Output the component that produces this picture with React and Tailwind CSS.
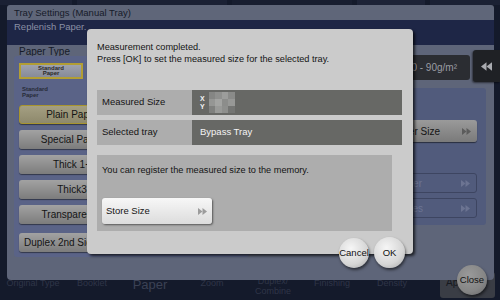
const Arrows = ({ color = "#9a9a9a", dir = "right", w = 9, h = 7 }) => (
  <svg width={w} height={h} viewBox="0 0 9 7" className="shrink-0">
    {dir === "right" ? (
      <g fill={color}>
        <polygon points="0,0 4.5,3.5 0,7" />
        <polygon points="4.5,0 9,3.5 4.5,7" />
      </g>
    ) : (
      <g fill={color}>
        <polygon points="4.5,0 0,3.5 4.5,7" />
        <polygon points="9,0 4.5,3.5 9,7" />
      </g>
    )}
  </svg>
);

const PanelButton = ({ children, selected, className = "" }) => (
  <div
    className={
      "h-[19px] w-[106px] shrink-0 rounded-[3px] flex items-center justify-center text-[10px] leading-[12px] text-[#141414] shadow-[0_1px_1px_rgba(0,0,0,0.45)] " +
      (selected
        ? "border border-[#a8952f] bg-[linear-gradient(#a49f82,#8e896c)] "
        : "bg-[linear-gradient(#a2a2a2,#7c7c7c)] ") +
      className
    }
  >
    {children}
  </div>
);

const Circle = ({ children, className = "" }) => (
  <div
    className={
      "absolute rounded-full flex items-center justify-center text-[9.5px] leading-[10px] text-[#111] shadow-[1px_2px_3px_rgba(0,0,0,0.55)] " +
      className
    }
  >
    {children}
  </div>
);

export default function App() {
  return (
    <div className="relative w-[500px] h-[300px] overflow-hidden bg-[#141a2b] font-['Liberation_Sans',Arial,sans-serif] text-[#111]">
      {/* top tabs of background screen */}
      <div className="flex h-[5px] gap-[5px]">
        <div className="w-[72px] bg-[#1b2134]" />
        <div className="w-[150px] bg-[#1b2134]" />
        <div className="w-[120px] bg-[#181e30]" />
        <div className="w-[68px] bg-[#1d2337]" />
        <div className="flex-1 bg-[#1b2134]" />
      </div>

      {/* window */}
      <div className="relative z-10 ml-[7px] w-[487px] h-[275px] flex flex-col">
        <div className="h-[15px] shrink-0 rounded-t-[3px] bg-[#5f6679] pl-[7px] text-[9.5px] leading-[15px] text-[#161b29]">
          Tray Settings (Manual Tray)
        </div>
        <div className="h-[25px] shrink-0 bg-[#1e2646] pl-[7px] pt-[2px] text-[9.5px] leading-[10px] text-[#8a90a5]">
          Replenish Paper.
        </div>
        <div className="flex-1 flex bg-[#5e6579] rounded-b-[4px]">
          {/* left column */}
          <div className="pl-[7px] w-[245px] flex flex-col">
            <div className="h-[11px] pl-[5px] text-[10px] leading-[14px] text-[#151a28]">Paper Type</div>
            <div className="h-[201px] w-[235px] rounded-[3px] bg-[#5a6387] px-[5px] pt-[7px] flex flex-col">
              <div className="h-[16px] w-[64px] border-2 border-[#b29e34] bg-[linear-gradient(#9ea2ae,#878b98)] flex flex-col items-center justify-center text-[6px] leading-[5.5px] font-bold text-[#2a2a2a]">
                <span>Standard</span>
                <span>Paper</span>
              </div>
              <div className="mt-[8px] h-[11px] pl-[3px] flex flex-col text-[6px] leading-[5.5px] font-bold text-[#272b38]">
                <span>Standard</span>
                <span>Paper</span>
              </div>
              <div className="mt-[7px] flex flex-col gap-[6px]">
                <PanelButton selected>Plain Paper</PanelButton>
                <PanelButton>Special Paper</PanelButton>
                <PanelButton>Thick 1+</PanelButton>
                <PanelButton>Thick3</PanelButton>
                <PanelButton>Transparency</PanelButton>
              </div>
              <PanelButton className="mt-[9px] !justify-start pl-[5px]">Duplex 2nd Side</PanelButton>
            </div>
          </div>

          {/* right column */}
          <div className="ml-auto mr-[8px] w-[170px] flex flex-col">
            <div className="mt-[10px] h-[25px] w-[154px] rounded-[3px] bg-[#2b2d32] flex items-center justify-end pr-[13px] text-[10px] text-[#9a9ca3]">
              60 - 90g/m²
            </div>
            <div className="mt-[8px] h-[137px] rounded-[3px] bg-[#515b7c] pr-[9px] pt-[32px] flex flex-col items-end">
              <div className="h-[22px] w-[150px] rounded-[3px] bg-[linear-gradient(#9a9a9a,#7a7a7a)] shadow-[0_1px_1px_rgba(0,0,0,0.5)] flex items-center justify-end pr-[6px] gap-[22px] text-[10px] text-[#141414]">
                <span>Paper Size</span>
                <Arrows color="#5c5c5c" />
              </div>
              <div className="mt-[31px] h-[20px] w-[150px] rounded-[3px] border border-[#3d4561] flex items-center justify-end pr-[6px] gap-[39px] text-[10px] text-[#6c7492]">
                <span>Register</span>
                <Arrows color="#6c7492" />
              </div>
              <div className="mt-[5px] h-[20px] w-[150px] rounded-[3px] border border-[#3d4561] flex items-center justify-end pr-[6px] gap-[38px] text-[10px] text-[#6c7492]">
                <span>Sizes</span>
                <Arrows color="#6c7492" />
              </div>
            </div>
          </div>
        </div>
      </div>

      {/* bottom strip (behind window) */}
      <div className="relative z-0 -mt-[8px] h-[28px] flex text-[9px] leading-[10px] text-[#2f3548]">
        <div className="w-[66px] pt-[6px] text-center">Original Type</div>
        <div className="w-[52px] pt-[6px] text-center">Booklet</div>
        <div className="w-[64px] pt-[6px] text-center text-[13px] leading-[14px] text-[#3b4154]">Paper</div>
        <div className="w-[60px] pt-[6px] text-center">Zoom</div>
        <div className="w-[62px] pt-[4px] text-center">Duplex/<br />Combine</div>
        <div className="w-[56px] pt-[6px] text-center">Finishing</div>
        <div className="w-[64px] pt-[6px] text-center">Density</div>
        <div className="w-[16px]" />
        <div className="w-[55px] h-[26px] rounded-[3px] bg-[#3a3d45] pl-[6px] pt-[6px] text-[10px] text-[#16181e]">Ap</div>
      </div>

      {/* back arrow tab */}
      <div className="absolute right-0 top-[50px] z-20 w-[27px] h-[32px] rounded-l-[3px] bg-[#1f2125] shadow-[-1px_1px_2px_rgba(0,0,0,0.5)] flex items-center justify-center">
        <Arrows dir="left" color="#a9abb0" w={11} h={9} />
      </div>

      {/* dialog */}
      <div className="absolute z-30 left-[87px] top-[29px] w-[326px] h-[225px] rounded-[4px] bg-[#cbcbcb] pl-[10px] pt-[12px] shadow-[2px_2px_3px_rgba(0,0,0,0.7)]">
        <div className="text-[9.2px] leading-[12px] text-[#141414]">
          Measurement completed.
          <br />
          Press [OK] to set the measured size for the selected tray.
        </div>
        <div className="mt-[25px] w-[305px] flex flex-col gap-[5px]">
          <div className="h-[25px] flex">
            <div className="w-[95px] bg-[#adadad] pl-[5px] flex items-center text-[9.5px] text-[#141414]">Measured Size</div>
            <div className="flex-1 bg-[#676865] flex items-center pl-[8px] gap-[4px]">
              <div className="flex flex-col text-[7px] leading-[8px] font-bold text-[#f2f2f2]">
                <span>X</span>
                <span>Y</span>
              </div>
              <div className="grid grid-cols-4 w-[26px] h-[21px]">
                <div className="bg-[#858684]" />
                <div className="bg-[#8f908e]" />
                <div className="bg-[#9c9d9b]" />
                <div className="bg-[#8a8b89]" />
                <div className="bg-[#959694]" />
                <div className="bg-[#a3a4a2]" />
                <div className="bg-[#8c8d8b]" />
                <div className="bg-[#979896]" />
                <div className="bg-[#7f807e]" />
                <div className="bg-[#999a98]" />
                <div className="bg-[#8e8f8d]" />
                <div className="bg-[#747573]" />
              </div>
            </div>
          </div>
          <div className="h-[25px] flex">
            <div className="w-[95px] bg-[#adadad] pl-[5px] flex items-center text-[9.5px] text-[#141414]">Selected tray</div>
            <div className="flex-1 bg-[#676865] flex items-center pl-[8px] text-[9.5px] text-[#f4f4f4]">Bypass Tray</div>
          </div>
        </div>
        <div className="mt-[10px] w-[295px] h-[76px] bg-[#adadad] pl-[5px] pt-[9px]">
          <div className="text-[9.2px] leading-[12px] text-[#141414]">You can register the measured size to the memory.</div>
          <div className="mt-[22px] w-[110px] h-[26px] rounded-[3px] bg-[linear-gradient(#f7f7f7,#dcdcdc)] shadow-[1px_1px_2px_rgba(0,0,0,0.5)] flex items-center justify-between pl-[4px] pr-[5px] text-[9.5px] text-[#141414]">
            <span>Store Size</span>
            <Arrows color="#9c9c9c" />
          </div>
        </div>
      </div>

      <Circle className="z-40 left-[339px] top-[238px] w-[30px] h-[30px] bg-[radial-gradient(circle_at_40%_35%,#f6f6f6,#d6d6d6_60%,#a4a4a4)]">
        Cancel
      </Circle>
      <Circle className="z-40 left-[374px] top-[237px] w-[31px] h-[31px] bg-[radial-gradient(circle_at_40%_35%,#f6f6f6,#d6d6d6_60%,#a4a4a4)]">
        OK
      </Circle>
      <Circle className="z-40 left-[457px] top-[265px] w-[30px] h-[30px] bg-[radial-gradient(circle_at_40%_35%,#9a9a9a,#858585_60%,#666)]">
        Close
      </Circle>
    </div>
  );
}
